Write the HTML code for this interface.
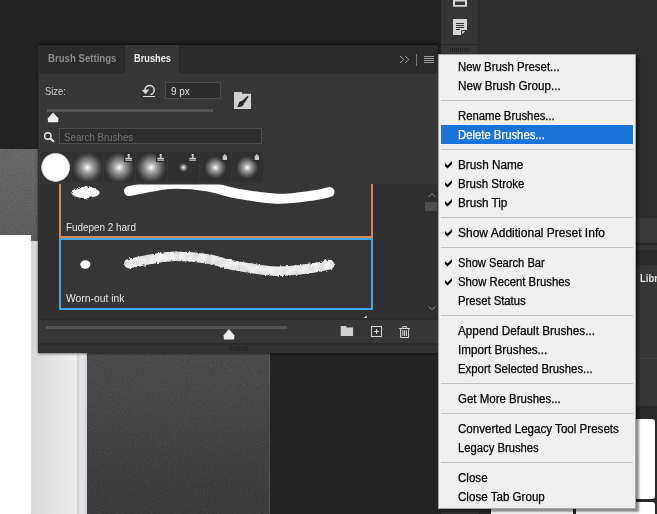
<!DOCTYPE html>
<html lang="en">
<head>
<meta charset="utf-8">
<title>Brushes panel menu</title>
<style>
html,body{margin:0;padding:0;}
body{width:657px;height:514px;overflow:hidden;position:relative;background:#232323;font-family:"Liberation Sans",sans-serif;}
.abs{position:absolute;}
#stage{position:absolute;left:0;top:0;width:657px;height:514px;overflow:hidden;background:#232323;}
/* canvas */
#cv-gray{left:0;top:149px;width:270px;height:365px;background:linear-gradient(#696969,#5f5f5f 85px,#4c4c4c 204px,#3b3b3b 365px);}
#cv-white{left:0;top:235px;width:31px;height:280px;background:#fff;}
#cv-lgray{left:31px;top:241px;width:46px;height:273px;background:linear-gradient(90deg,#d8d8d8,#e1e1e1 40%,#eeeeee);}
#cv-strip{left:77px;top:241px;width:10px;height:273px;background:linear-gradient(90deg,#cdcdd4,#e6e6ea 40%,#dedee2 75%,#d2d2d6);}
/* right side */
#rt-bg{left:479px;top:0;width:178px;height:514px;background:#2e2e2e;}
.rb{position:absolute;left:479px;width:178px;}
.thumb{position:absolute;background:#fff;border-radius:3px;}
#dock{left:441px;top:0;width:38px;height:514px;background:#353535;}
/* panel */
#panel{left:39px;top:45px;width:399px;height:308px;background:#363636;box-shadow:-1px 0 0 0 #2f2f2f,0 0 2px 1px rgba(0,0,0,.45),0 -2px 4px rgba(0,0,0,.35);}
#tabbar{left:0;top:0;width:399px;height:28px;background:#2a2a2a;border-bottom:1px solid #303030;}
#tab-active{left:86px;top:0;width:54px;height:29px;background:#363636;}
.tabtxt{font-weight:bold;font-size:10.5px;line-height:27px;top:0;white-space:nowrap;transform-origin:0 50%;}
.lbl{font-size:11px;color:#cfcfcf;white-space:nowrap;transform-origin:0 50%;line-height:13px;}
#sizebox{left:126px;top:37px;width:54px;height:15px;border:1px solid #4c4c4c;background:#2c2c2c;}
#track1{left:8px;top:64px;width:166px;height:3px;background:#555;}
#search{left:20px;top:83px;width:201px;height:14px;border:1px solid #4c4c4c;background:#2c2c2c;}
.cell{position:absolute;top:107px;width:31px;height:30px;background:#303030;}
#list{left:0;top:139px;width:399px;height:135px;background:#2f2f2f;overflow:hidden;}
#listleft{left:0;top:0;width:21px;height:135px;background:#303030;}
.item{position:absolute;left:20px;width:310px;background:#363636;}
#botline{left:0;top:274px;width:399px;height:1px;background:#2a2a2a;}
#track2{left:7px;top:281px;width:241px;height:3px;background:#525252;}
#botdark{left:0;top:298px;width:399px;height:2px;background:#2a2a2a;}
#botstrip{left:0;top:300px;width:399px;height:8px;background:#313131;}
/* menu */
#menu{left:438px;top:54px;width:196px;height:453px;background:#f0f0f0;border:1px solid #a6a6a6;box-shadow:3px 3px 2px rgba(0,0,0,.45);}
.mi{position:absolute;left:2px;width:192px;height:19px;line-height:19px;font-size:12px;color:#000;white-space:nowrap;}
.mi span{position:absolute;left:16.5px;top:1px;display:inline-block;transform-origin:0 50%;-webkit-text-stroke:.25px currentColor;}
.mi.hl{background:#1a73d9;color:#fff;}
.mi svg{position:absolute;left:4px;top:6px;overflow:visible;}
.sep{position:absolute;left:2px;width:192px;height:1px;background:#c4c4c4;}
</style>
</head>
<body>
<div id="stage">
  <div class="abs" id="cv-gray"></div>
  <svg class="abs" style="left:0;top:0" width="270" height="514" viewBox="0 0 270 514">
    <filter id="noise" filterUnits="userSpaceOnUse" x="0" y="149" width="270" height="365"><feTurbulence type="fractalNoise" baseFrequency="0.7" numOctaves="2" seed="5"/><feColorMatrix type="matrix" values="0 0 0 0 1  0 0 0 0 1  0 0 0 0 1  1.6 0 0 0 -0.72"/></filter>
    <filter id="noise2" filterUnits="userSpaceOnUse" x="0" y="149" width="270" height="365"><feTurbulence type="fractalNoise" baseFrequency="0.7" numOctaves="2" seed="11"/><feColorMatrix type="matrix" values="0 0 0 0 0  0 0 0 0 0  0 0 0 0 0  1.6 0 0 0 -0.72"/></filter>
    <rect x="0" y="149" width="270" height="365" fill="#fff" filter="url(#noise)" opacity=".07"/>
    <rect x="0" y="149" width="270" height="365" fill="#000" filter="url(#noise2)" opacity=".2"/>
  </svg>
  <div class="abs" style="left:269px;top:149px;width:1px;height:365px;background:rgba(255,255,255,.1);"></div>
  <div class="abs" id="cv-white"></div>
  <div class="abs" id="cv-lgray"></div>
  <div class="abs" id="cv-strip"></div>
  <div class="abs" id="rt-bg"></div>
  <div class="abs" id="dock"></div>
  <div class="rb" style="top:218px;height:25px;background:#383838;"></div>
  <div class="rb" style="top:243px;height:2px;background:#262626;"></div>
  <div class="rb" style="top:245px;height:5px;background:#363636;"></div>
  <div class="rb" style="top:250px;height:15px;background:#2a2a2a;"></div>
  <div class="rb" style="top:265px;height:141px;background:#363636;"></div>
  <div class="rb" style="top:358px;height:1px;background:#404040;"></div>
  <div class="rb" style="top:406px;height:108px;background:#2a2a2a;"></div>
  <div class="abs tabtxt" style="left:640px;top:264.5px;color:#e4e4e4;transform:scaleX(.9);">Libraries</div>
  <div class="thumb" style="left:491px;top:418.5px;width:81.5px;height:80.5px;"></div>
  <div class="thumb" style="left:575.5px;top:418.5px;width:79.5px;height:80.5px;"></div>
  <div class="thumb" style="left:491px;top:502px;width:81.5px;height:30px;"></div>
  <div class="thumb" style="left:575.5px;top:502px;width:79.5px;height:30px;"></div>

  <div class="abs" id="panel">
    <div class="abs" id="tabbar"></div>
    <div class="abs" id="tab-active"></div>
    <div class="abs tabtxt" id="t1" style="left:9px;color:#8c8c8c;transform:scaleX(.916);">Brush Settings</div>
    <div class="abs tabtxt" id="t2" style="left:95px;color:#f0f0f0;transform:scaleX(.88);">Brushes</div>

    <div class="abs lbl" id="l1" style="left:6px;top:40px;transform:scaleX(.85);">Size:</div>
    <div class="abs" id="sizebox"><div class="abs lbl" id="l2" style="left:5px;top:2px;color:#e0e0e0;transform:scaleX(.9);">9 px</div></div>
    <div class="abs" id="track1"></div>
    <div class="abs" id="search"><div class="abs lbl" id="l3" style="left:4px;top:2px;color:#747474;transform:scaleX(.884);">Search Brushes</div></div>

    <div class="cell" style="left:1px"></div>
    <div class="cell" style="left:33px"></div>
    <div class="cell" style="left:65px"></div>
    <div class="cell" style="left:97px"></div>
    <div class="cell" style="left:129px"></div>
    <div class="cell" style="left:161px"></div>
    <div class="cell" style="left:193px"></div>

    <div class="abs" id="list">
      <div class="abs" id="listleft"></div>
      <div class="item" style="top:-42px;height:92px;border:2px solid #d38a5a;"><div class="abs lbl" id="l4" style="left:5px;top:77px;color:#e6e6e6;transform:scaleX(.9);">Fudepen 2 hard</div></div>
      <div class="item" style="top:54px;height:68px;border:2px solid #44a7ea;"><div class="abs lbl" id="l5" style="left:5px;top:52px;color:#e6e6e6;transform:scaleX(.94);">Worn-out ink</div></div>
    </div>
    <div class="abs" id="botline"></div>
    <div class="abs" id="track2"></div>
    <div class="abs" id="botdark"></div>
    <div class="abs" id="botstrip"></div>
  </div>

  <svg class="abs" id="ov" style="left:0;top:0" width="657" height="514" viewBox="0 0 657 514">
    <defs>
      <radialGradient id="hard"><stop offset="0" stop-color="#fff"/><stop offset=".88" stop-color="#fff"/><stop offset=".95" stop-color="#bdbdbd"/><stop offset="1" stop-color="#363636"/></radialGradient>
      <radialGradient id="soft"><stop offset="0" stop-color="#fff"/><stop offset=".1" stop-color="#e4e4e4"/><stop offset=".3" stop-color="#adadad"/><stop offset=".55" stop-color="#7c7c7c"/><stop offset=".8" stop-color="#4e4e4e"/><stop offset="1" stop-color="#303030"/></radialGradient>
      <clipPath id="listclip"><rect x="39" y="184.5" width="399" height="134.5"/></clipPath>
      <filter id="rough" filterUnits="userSpaceOnUse" x="39" y="170" width="400" height="160"><feTurbulence type="fractalNoise" baseFrequency="0.35" numOctaves="2" seed="3" result="n"/><feDisplacementMap in="SourceGraphic" in2="n" scale="1.5"/></filter>
      <filter id="rough2" filterUnits="userSpaceOnUse" x="39" y="170" width="400" height="160"><feTurbulence type="fractalNoise" baseFrequency="0.45" numOctaves="2" seed="8" result="n"/><feDisplacementMap in="SourceGraphic" in2="n" scale="3" result="d"/><feGaussianBlur in="d" stdDeviation=".75" result="b"/><feTurbulence type="fractalNoise" baseFrequency="0.16" numOctaves="1" seed="21" result="m"/><feColorMatrix in="m" type="matrix" values="0 0 0 0 0.5  0 0 0 0 0.5  0 0 0 0 0.5  0 0 0 1.3 -0.48" result="mm"/><feComposite in="mm" in2="b" operator="in" result="mc"/><feMerge><feMergeNode in="b"/><feMergeNode in="mc"/></feMerge></filter>
      <filter id="rough3" filterUnits="userSpaceOnUse" x="60" y="176" width="60" height="34"><feTurbulence type="fractalNoise" baseFrequency="0.28" numOctaves="2" seed="14" result="n"/><feDisplacementMap in="SourceGraphic" in2="n" scale="5"/></filter>
    </defs>
    <!-- recent brushes -->
    <circle cx="55.6" cy="167.4" r="14.8" fill="url(#hard)"/>
    <circle cx="87.5" cy="167.5" r="14.8" fill="url(#soft)"/>
    <circle cx="119.3" cy="167.5" r="14.8" fill="url(#soft)"/>
    <circle cx="151.2" cy="167.5" r="14.8" fill="url(#soft)"/>
    <circle cx="183.5" cy="167.5" r="4.6" fill="url(#soft)"/>
    <circle cx="215.4" cy="167.5" r="11" fill="url(#soft)"/>
    <circle cx="247.2" cy="167.5" r="11" fill="url(#soft)"/>

    <!-- reset icon -->
    <g fill="none" stroke="#dcdcdc">
      <path d="M145,90.2 A4.6,4.6 0 1 1 150.6,94.5" stroke-width="1.5"/>
      <path d="M143,96.5 H155" stroke-width="1"/>
    </g>
    <path d="M141.8,90 L149.2,89.6 L145.6,94.2 Z" fill="#dcdcdc"/>
    <!-- brush preset picker icon -->
    <path d="M234,92 H242 V93.7 H251 V109 H234 Z" fill="#d2d2d2"/>
    <path d="M247.7,95.8 L248.6,96.7 L244.5,103 L241.9,100.9 Z" fill="#2a2a2a"/>
    <path d="M242.4,101.1 C244.8,102.4 244.4,105.5 241.7,106.4 C240,107 238.6,106.6 237.1,107 C238.8,105.6 238,103.8 239.2,102.3 C240,101.3 241.4,100.8 242.4,101.1 Z" fill="#2a2a2a"/>
    <!-- slider thumbs -->
    <path d="M53.1,112.5 L58.3,118.2 V121.2 Q58.3,122.2 57.3,122.2 H48.9 Q47.9,122.2 47.9,121.2 V118.2 Z" fill="#ececec"/>
    <path d="M229,329.1 L234.3,335.2 V338.4 Q234.3,339.5 233.2,339.5 H224.8 Q223.7,339.5 223.7,338.4 V335.2 Z" fill="#ececec"/>
    <!-- search icon -->
    <circle cx="47.8" cy="136" r="3.2" fill="none" stroke="#ececec" stroke-width="1.4"/>
    <path d="M50.3,138.6 L53.4,141.3" stroke="#ececec" stroke-width="2" stroke-linecap="round"/>
    <!-- stamp badges -->
    <g>
      <rect x="124" y="153" width="9" height="9" fill="#2c2c2c"/>
      <path d="M127.6,154.1 h2.2 v1.7 l-.5,2 h2.8 v1.7 h-6.8 v-1.7 h2.8 l-.5,-2 Z M125.3,160 h6.8 v.8 h-6.8 Z" fill="#c8c8c8"/>
    </g>
    <g transform="translate(32,0)">
      <rect x="124" y="153" width="9" height="9" fill="#2c2c2c"/>
      <path d="M127.6,154.1 h2.2 v1.7 l-.5,2 h2.8 v1.7 h-6.8 v-1.7 h2.8 l-.5,-2 Z M125.3,160 h6.8 v.8 h-6.8 Z" fill="#c8c8c8"/>
    </g>
    <g transform="translate(64,0)">
      <rect x="124" y="153" width="9" height="9" fill="#2c2c2c"/>
      <path d="M127.6,154.1 h2.2 v1.7 l-.5,2 h2.8 v1.7 h-6.8 v-1.7 h2.8 l-.5,-2 Z M125.3,160 h6.8 v.8 h-6.8 Z" fill="#c8c8c8"/>
    </g>
    <!-- drop badges -->
    <g>
      <rect x="220.6" y="152.4" width="7.6" height="9" fill="#2c2c2c"/>
      <path d="M224.9,153.7 L227,156.5 V159.9 H222.7 V156.5 Z" fill="#c8c8c8"/>
    </g>
    <g transform="translate(32,0)">
      <rect x="220.6" y="152.4" width="7.6" height="9" fill="#2c2c2c"/>
      <path d="M224.9,153.7 L227,156.5 V159.9 H222.7 V156.5 Z" fill="#c8c8c8"/>
    </g>
    <!-- tab bar icons -->
    <path d="M400,56 L403.8,59.5 L400,63 M405,56 L408.8,59.5 L405,63" fill="none" stroke="#a0a0a0" stroke-width="1"/>
    <rect x="416" y="54" width="1" height="12" fill="#7a7a7a"/>
    <path d="M424,56.5 H434 M424,58.5 H434 M424,60.5 H434 M424,62.5 H434" stroke="#9c9c9c" stroke-width="1"/>
    <!-- scrollbar -->
    <path d="M428.6,197 L432,193.6 L435.4,197" fill="none" stroke="#8c8c8c" stroke-width="1"/>
    <rect x="425" y="202" width="12" height="9" fill="#4d4d4d"/>
    <path d="M428.6,306.4 L432,309.8 L435.4,306.4" fill="none" stroke="#8c8c8c" stroke-width="1"/>
    <path d="M366.8,315.2 V317.9 H363.8 Z" fill="#e8e8e8"/>
    <!-- bottom icons -->
    <path d="M340.7,326 H346.4 V327.6 H353.1 V336 H340.7 Z" fill="#d0d0d0"/>
    <rect x="371.5" y="326.5" width="10" height="10" fill="none" stroke="#d8d8d8" stroke-width="1"/>
    <path d="M374,331.5 H379 M376.5,329 V334" stroke="#d8d8d8" stroke-width="1"/>
    <g fill="none" stroke="#d8d8d8" stroke-width="1">
      <path d="M399.2,328.5 H410"/>
      <path d="M402.8,328.5 V326.6 H406.4 V328.5"/>
      <path d="M400.6,328.5 V337.5 H408.6 V328.5"/>
      <path d="M402.8,330.2 V336 M404.6,330.2 V336 M406.4,330.2 V336"/>
    </g>
    <!-- bottom grip -->
    <path d="M229.5,346 V351 M231.5,346 V351 M233.5,346 V351 M235.5,346 V351 M237.5,346 V351 M239.5,346 V351 M241.5,346 V351 M243.5,346 V351 M245.5,346 V351 M247.5,346 V351" stroke="#262626" stroke-width="1"/>
    <!-- dock icons -->
    <path d="M453,0 H467 V6.8 H453 Z M455,1.6 V5 H465 V1.6 Z" fill="#d8d8d8" fill-rule="evenodd"/>
    <path d="M453,19 H467 V30 L462,35 H453 Z" fill="#d6d6d6"/>
    <path d="M456,23.5 H464 M456,25.5 H464 M456,27.5 H464 M456,29.5 H460" stroke="#2c2c2c" stroke-width="1"/>
    <path d="M461.6,30.6 H466.4 L461.6,35.2 Z" fill="#d6d6d6" stroke="#2c2c2c" stroke-width="1"/>
    <rect x="441" y="44" width="38" height="1" fill="#262626"/>
    <rect x="478" y="0" width="1" height="54" fill="#2a2a2a"/>
    <path d="M450.5,48 V52 M452.5,48 V52 M454.5,48 V52 M456.5,48 V52 M458.5,48 V52 M460.5,48 V52 M462.5,48 V52 M464.5,48 V52 M466.5,48 V52 M468.5,48 V52" stroke="#242424" stroke-width="1"/>
    <!-- strokes -->
    <g clip-path="url(#listclip)">
      <path d="M129.0,191.1 C133.0,190.3 144.5,187.8 152.5,186.5 C160.5,185.2 166.9,183.8 176.0,183.8 C185.1,183.8 197.0,184.7 207.0,186.3 C217.0,187.9 224.3,191.2 236.0,193.3 C247.7,195.4 264.2,198.3 277.0,198.7 C289.8,199.1 304.0,196.7 313.0,195.5 C321.0,194.4 326.5,192.7 329.5,192" fill="none" stroke="#fff" stroke-width="10" stroke-linecap="round" filter="url(#rough)"/>
      <ellipse cx="85.5" cy="192.5" rx="14" ry="5.8" fill="#fff" filter="url(#rough3)"/>
      <path transform="translate(0,72.5)" d="M129.0,191.1 C133.0,190.3 144.5,187.8 152.5,186.5 C160.5,185.2 166.9,183.8 176.0,183.8 C185.1,183.8 197.0,184.7 207.0,186.3 C217.0,187.9 224.3,191.2 236.0,193.3 C247.7,195.4 264.2,198.3 277.0,198.7 C289.8,199.1 304.0,196.7 313.0,195.5 C321.0,194.4 326.5,192.7 329.5,192" fill="none" stroke="#f3f3f3" stroke-width="9.6" stroke-linecap="round" filter="url(#rough2)"/>
      <ellipse cx="85.3" cy="264.5" rx="5" ry="4.2" fill="#fff"/>
    </g>
  </svg>

  <div class="abs" id="menu">
    <div class="mi" style="top:2px"><span style="transform:scaleX(0.952)">New Brush Preset...</span></div>
    <div class="mi" style="top:21px"><span style="transform:scaleX(0.975)">New Brush Group...</span></div>
    <div class="sep" style="top:45px"></div>
    <div class="mi" style="top:51px"><span style="transform:scaleX(0.942)">Rename Brushes...</span></div>
    <div class="mi hl" style="top:70px"><span style="transform:scaleX(0.943)">Delete Brushes...</span></div>
    <div class="sep" style="top:94px"></div>
    <div class="mi" style="top:100px"><svg width="7" height="8" viewBox="0 0 7 8"><path d="M0,1.9 L2.5,4.4 L7,-0.1 V3 L2.5,7.5 L0,5 Z" fill="#000"/></svg><span style="transform:scaleX(0.980)">Brush Name</span></div>
    <div class="mi" style="top:119px"><svg width="7" height="8" viewBox="0 0 7 8"><path d="M0,1.9 L2.5,4.4 L7,-0.1 V3 L2.5,7.5 L0,5 Z" fill="#000"/></svg><span style="transform:scaleX(0.959)">Brush Stroke</span></div>
    <div class="mi" style="top:138px"><svg width="7" height="8" viewBox="0 0 7 8"><path d="M0,1.9 L2.5,4.4 L7,-0.1 V3 L2.5,7.5 L0,5 Z" fill="#000"/></svg><span style="transform:scaleX(0.974)">Brush Tip</span></div>
    <div class="sep" style="top:162px"></div>
    <div class="mi" style="top:168px"><svg width="7" height="8" viewBox="0 0 7 8"><path d="M0,1.9 L2.5,4.4 L7,-0.1 V3 L2.5,7.5 L0,5 Z" fill="#000"/></svg><span style="transform:scaleX(1.001)">Show Additional Preset Info</span></div>
    <div class="sep" style="top:192px"></div>
    <div class="mi" style="top:198px"><svg width="7" height="8" viewBox="0 0 7 8"><path d="M0,1.9 L2.5,4.4 L7,-0.1 V3 L2.5,7.5 L0,5 Z" fill="#000"/></svg><span style="transform:scaleX(0.929)">Show Search Bar</span></div>
    <div class="mi" style="top:217px"><svg width="7" height="8" viewBox="0 0 7 8"><path d="M0,1.9 L2.5,4.4 L7,-0.1 V3 L2.5,7.5 L0,5 Z" fill="#000"/></svg><span style="transform:scaleX(0.945)">Show Recent Brushes</span></div>
    <div class="mi" style="top:236px"><span style="transform:scaleX(0.939)">Preset Status</span></div>
    <div class="sep" style="top:260px"></div>
    <div class="mi" style="top:266px"><span style="transform:scaleX(0.978)">Append Default Brushes...</span></div>
    <div class="mi" style="top:285px"><span style="transform:scaleX(0.978)">Import Brushes...</span></div>
    <div class="mi" style="top:304px"><span style="transform:scaleX(0.947)">Export Selected Brushes...</span></div>
    <div class="sep" style="top:328px"></div>
    <div class="mi" style="top:334px"><span style="transform:scaleX(0.957)">Get More Brushes...</span></div>
    <div class="sep" style="top:358px"></div>
    <div class="mi" style="top:364px"><span style="transform:scaleX(0.966)">Converted Legacy Tool Presets</span></div>
    <div class="mi" style="top:383px"><span style="transform:scaleX(0.938)">Legacy Brushes</span></div>
    <div class="sep" style="top:407px"></div>
    <div class="mi" style="top:413px"><span style="transform:scaleX(0.964)">Close</span></div>
    <div class="mi" style="top:432px"><span style="transform:scaleX(0.966)">Close Tab Group</span></div>
  </div>
</div>
</body>
</html>
